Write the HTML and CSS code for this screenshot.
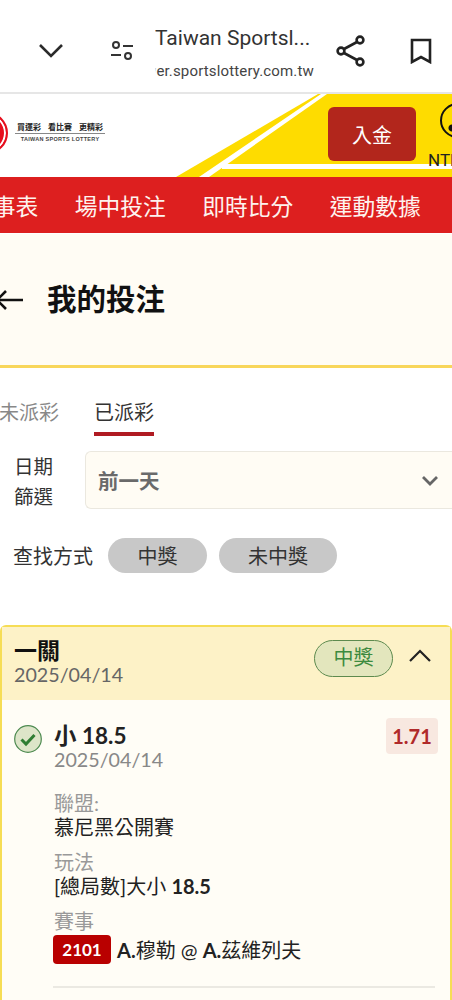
FILE: index.html
```html
<!DOCTYPE html>
<html lang="zh-Hant">
<head>
    <meta charset="UTF-8">
    <meta name="viewport" content="width=device-width, initial-scale=1.0">
    <title>我的投注</title>
    <link rel="stylesheet" href="styles.css">
</head>
<body>
    <div class="toolbar">
        <svg class="tool-icon chevron" width="28" height="18" viewBox="0 0 28 18"><path d="M3 3l11 11L25 3" fill="none" stroke="#2b2b2b" stroke-width="2.6"/></svg>
        <svg class="tool-icon tune" width="24" height="20" viewBox="0 0 24 20"><g fill="none" stroke="#333" stroke-width="2"><circle cx="6" cy="4" r="3"/><path d="M13 5h10M1 14h10"/><circle cx="18" cy="15" r="3"/></g></svg>
        <div class="tool-title">
            <div class="tool-name">Taiwan Sportsl...</div>
            <div class="tool-url"><span class="fade">w</span>er.sportslottery.com.tw</div>
        </div>
        <svg class="tool-icon share" width="30" height="32" viewBox="0 0 30 32"><g fill="none" stroke="#222" stroke-width="2.6"><circle cx="24" cy="5" r="3.4"/><circle cx="5" cy="16" r="3.4"/><circle cx="24" cy="27" r="3.4"/><path d="M8 14L21 7M8 18l13 7"/></g></svg>
        <svg class="tool-icon bookmark" width="22" height="26" viewBox="0 0 22 26"><path d="M2 2h18v22l-9-5-9 5z" fill="none" stroke="#222" stroke-width="2.6"/></svg>
    </div>

    <header class="site-header">
        <svg class="stripes" width="452" height="83" viewBox="0 0 452 83">
            <polygon points="176,83 318,0 452,0 452,83" fill="#fedc00"/>
            <polygon points="199,83 321,0 327,0 209,83" fill="#fff"/>
            <rect x="222" y="70" width="230" height="5" fill="#fff"/>
        </svg>
        <div class="logo">
            <div class="logo-mark"></div>
            <div class="logo-text">
                <div class="logo-zh"><span>買運彩</span><span>看比賽</span><span>更精彩</span></div>
                <div class="logo-en">TAIWAN SPORTS LOTTERY</div>
            </div>
        </div>
        <div class="header-right">
            <button class="deposit">入金</button>
            <div class="wallet">
                <div class="wallet-icon"></div>
                <div class="wallet-label">NTD 0</div>
            </div>
        </div>
    </header>

    <nav class="main-nav">
        <a>賽事表</a>
        <a>場中投注</a>
        <a>即時比分</a>
        <a>運動數據</a>
    </nav>

    <section class="page-title">
        <svg class="back" width="28" height="22" viewBox="0 0 28 22"><path d="M27 11H2M10 2l-9 9 9 9" fill="none" stroke="#111" stroke-width="2.6"/></svg>
        <h1>我的投注</h1>
    </section>

    <div class="tabs">
        <div class="tab">未派彩</div>
        <div class="tab active">已派彩</div>
    </div>

    <div class="filter-row">
        <label class="filter-label">日期<br>篩選</label>
        <div class="select">
            <span>前一天</span>
            <svg width="18" height="11" viewBox="0 0 18 11"><path d="M2 2l7 7 7-7" fill="none" stroke="#666" stroke-width="2.8"/></svg>
        </div>
    </div>

    <div class="search-row">
        <span class="search-label">查找方式</span>
        <button class="pill pill-a">中獎</button>
        <button class="pill pill-b">未中獎</button>
    </div>

    <section class="bet-card">
        <div class="bet-head">
            <div>
                <div class="bet-type">一關</div>
                <div class="bet-date">2025/04/14</div>
            </div>
            <div class="bet-status">
                <span class="won">中獎</span>
                <svg width="24" height="14" viewBox="0 0 24 14"><path d="M2 12L12 2l10 10" fill="none" stroke="#222" stroke-width="2.2"/></svg>
            </div>
        </div>
        <div class="bet-body">
            <svg class="check" width="28" height="28" viewBox="0 0 28 28"><circle cx="14" cy="14" r="13.3" fill="#dde5c8" stroke="#4d8a50" stroke-width="1.2"/><path d="M7.500 14.500l4.500 4.500 8.500-9" fill="none" stroke="#2f7d32" stroke-width="3"/></svg>
            <div class="leg">
                <div class="leg-top">
                    <div>
                        <div class="pick">小 18.5</div>
                        <div class="leg-date">2025/04/14</div>
                    </div>
                    <div class="odds">1.71</div>
                </div>
                <div class="field first">
                    <div class="field-label">聯盟:</div>
                    <div class="field-value">慕尼黑公開賽</div>
                </div>
                <div class="field">
                    <div class="field-label">玩法</div>
                    <div class="field-value">[總局數]大小 <b>18.5</b></div>
                </div>
                <div class="field">
                    <div class="field-label">賽事</div>
                    <div class="field-value match"><span class="code">2101</span><span><b>A.</b>穆勒 @ <b>A.</b>茲維列夫</span></div>
                </div>
                <div class="divider"></div>
            </div>
        </div>
    </section>
</body>
</html>
```

FILE: styles.css
```css
html, body {
    margin: 0;
    padding: 0;
    height: 1000px;
    overflow: hidden;
}
body {
    font-family: 'Lato', 'Noto Sans CJK TC', sans-serif;
    background: #fff;
    color: #222;
    width: 452px;
}

/* browser toolbar */
.toolbar {
    height: 94px;
    padding-top: 10px;
    box-sizing: border-box;
    display: flex;
    align-items: center;
    border-bottom: 2px solid #e6e6e6;
}
.tool-icon {
    flex: none;
}
.chevron {
    margin-left: 37px;
}
.tune {
    margin-left: 45px;
}
.tool-title {
    margin: 4px 0 0 21px;
    width: 168px;
    overflow: hidden;
    font-family: 'Roboto', sans-serif;
    white-space: nowrap;
}
.tool-name {
    font-size: 21px;
    line-height: 26px;
    color: #333;
}
.tool-url {
    font-size: 15px;
    line-height: 20px;
    margin-top: 10px;
    color: #444;
    letter-spacing: 0.15px;
}
.fade {
    color: #ccc;
    margin-left: -10px;
}
.share {
    margin-left: 13px;
}
.bookmark {
    margin-left: 44px;
}

/* site header */
.site-header {
    height: 83px;
    position: relative;
    display: flex;
    justify-content: space-between;
    overflow: hidden;
}
.stripes {
    position: absolute;
    left: 0;
    top: 0;
}
.logo {
    position: relative;
    display: flex;
    align-items: center;
    margin-left: -34px;
    height: 78px;
}
.logo-mark {
    width: 42px;
    height: 42px;
    border-radius: 50%;
    background: #e60f1e;
    border: 2px solid #e60f1e;
    box-shadow: inset 0 0 0 2px #fff;
    box-sizing: border-box;
}
.logo-text {
    margin-left: 7px;
    width: 90px;
}
.logo-zh {
    display: flex;
    justify-content: space-between;
    padding: 0 2px;
    font-size: 8px;
    line-height: 11px;
    font-weight: 700;
    color: #222;
    border-bottom: 1px solid #888;
}
.logo-en {
    font-family: 'Liberation Sans', sans-serif;
    font-size: 5.500px;
    line-height: 10px;
    text-align: center;
    font-weight: 700;
    letter-spacing: 0.3px;
    color: #444;
}
.header-right {
    position: relative;
    display: flex;
    align-items: flex-start;
    margin-right: -46px;
}
.deposit {
    margin-top: 13px;
    width: 88px;
    height: 54px;
    border: none;
    border-radius: 6px;
    background: #b2261c;
    color: #fff;
    font-family: inherit;
    font-size: 20px;
    padding: 0;
}
.wallet {
    margin-left: 12px;
    width: 70px;
    white-space: nowrap;
}
.wallet-icon {
    width: 35px;
    height: 35px;
    margin: 9px 0 12px 12px;
    border: 2.500px solid #111;
    border-radius: 50%;
    box-sizing: border-box;
    background: radial-gradient(circle at 10px 23px, #111 3px, transparent 4px);
}
.wallet-label {
    font-size: 17px;
    line-height: 20px;
    font-family: 'Roboto', sans-serif;
    color: #222;
}

/* main nav */
.main-nav {
    height: 56px;
    background: #dd1f1f;
    display: flex;
    align-items: center;
    gap: 36.500px;
    margin-left: -30px;
    white-space: nowrap;
}
.main-nav a {
    color: #fdf3ef;
    font-size: 22.750px;
}

/* page title */
.page-title {
    height: 134px;
    margin-top: 1px;
    padding-bottom: 6px;
    background: #fffcf4;
    border-bottom: 3px solid #f8d65a;
    display: flex;
    align-items: center;
    box-sizing: border-box;
}
.back {
    margin: 6px 0 0 -4px;
    flex: none;
}
.page-title h1 {
    margin: 0 0 0 23px;
    font-size: 29.500px;
    font-weight: 700;
    color: #111;
}

/* tabs */
.tabs {
    display: flex;
    gap: 35px;
    margin: 28px 0 0 -1px;
    height: 40px;
}
.tab {
    font-size: 20px;
    line-height: 32px;
    color: #888;
    width: 60px;
    height: 40px;
    box-sizing: border-box;
    text-align: center;
    white-space: nowrap;
}
.tab.active {
    color: #333;
    border-bottom: 4px solid #b01b22;
}

/* filters */
.filter-row {
    display: flex;
    align-items: flex-start;
    margin-top: 15px;
}
.filter-label {
    width: 85px;
    padding: 1px 0 0 14px;
    box-sizing: border-box;
    font-size: 19.500px;
    line-height: 30px;
    color: #333;
    flex: none;
}
.select {
    flex: 1;
    height: 58px;
    background: #fffcf4;
    border: 1px solid #ebe8df;
    border-right: none;
    border-radius: 6px 0 0 6px;
    display: flex;
    align-items: center;
    justify-content: space-between;
    padding: 0 13px 0 12px;
    box-sizing: border-box;
    font-size: 20.500px;
    font-weight: 700;
    color: #6a6a6a;
}
.search-row {
    display: flex;
    align-items: center;
    margin: 26px 0 0 13px;
}
.search-label {
    font-size: 20px;
    color: #333;
    width: 95px;
}
.pill {
    height: 35px;
    border: none;
    border-radius: 18px;
    background: #c8c8c8;
    color: #333;
    font-family: inherit;
    font-size: 20px;
    padding: 0;
}
.pill-a {
    width: 99px;
}
.pill-b {
    width: 118px;
    margin-left: 12px;
}

/* bet card */
.bet-card {
    margin-top: 52px;
    border: 2px solid #f6dd55;
    border-bottom: none;
    border-radius: 6px 6px 0 0;
    background: #fffdf6;
    height: 400px;
}
.bet-head {
    height: 73px;
    background: #fdf2c7;
    display: flex;
    justify-content: space-between;
    padding: 10px 18px 0 12px;
    box-sizing: border-box;
}
.bet-type {
    font-size: 23px;
    line-height: 26px;
    font-weight: 700;
    color: #111;
}
.bet-date {
    font-size: 19.700px;
    line-height: 23px;
    color: #666;
}
.bet-status {
    display: flex;
    align-items: flex-start;
    gap: 15px;
}
.bet-status svg {
    margin-top: 12px;
}
.won {
    width: 79px;
    height: 37px;
    box-sizing: border-box;
    border: 1px solid #5d8a4e;
    border-radius: 19px;
    background: #e3e6bd;
    color: #3d8a3f;
    font-size: 20px;
    line-height: 33px;
    text-align: center;
    margin-top: 3px;
}
.bet-body {
    display: flex;
    padding: 25px 12px 0;
}
.check {
    flex: none;
}
.leg {
    margin-left: 12px;
    flex: 1;
}
.leg-top {
    display: flex;
    justify-content: space-between;
    align-items: flex-start;
    margin-top: -2px;
}
.pick {
    font-size: 22.500px;
    line-height: 25px;
    font-weight: 700;
    color: #222;
}
.leg-date {
    font-size: 19.700px;
    line-height: 24px;
    color: #888;
}
.odds {
    width: 52px;
    height: 36px;
    margin-top: -5px;
    border-radius: 4px;
    background: #f8e8e0;
    color: #b02a2a;
    font-size: 20px;
    font-weight: 700;
    line-height: 36px;
    text-align: center;
}
.field {
    margin-top: 11px;
}
.field.first {
    margin-top: 19px;
}
.field-label {
    font-size: 20px;
    line-height: 24px;
    color: #999;
}
.field-value {
    font-size: 20px;
    line-height: 24px;
    color: #222;
    white-space: nowrap;
}
.match {
    display: flex;
    align-items: center;
    margin: 2px 0 0 -1px;
}
.code {
    width: 58px;
    height: 29px;
    margin-right: 6px;
    border-radius: 4px;
    background: #b90000;
    color: #fff;
    font-size: 17px;
    line-height: 29px;
    font-weight: 700;
    text-align: center;
}
.divider {
    height: 2px;
    background: #ebe9e2;
    margin: 22px 0 0 -1px;
    width: 382px;
}
```
